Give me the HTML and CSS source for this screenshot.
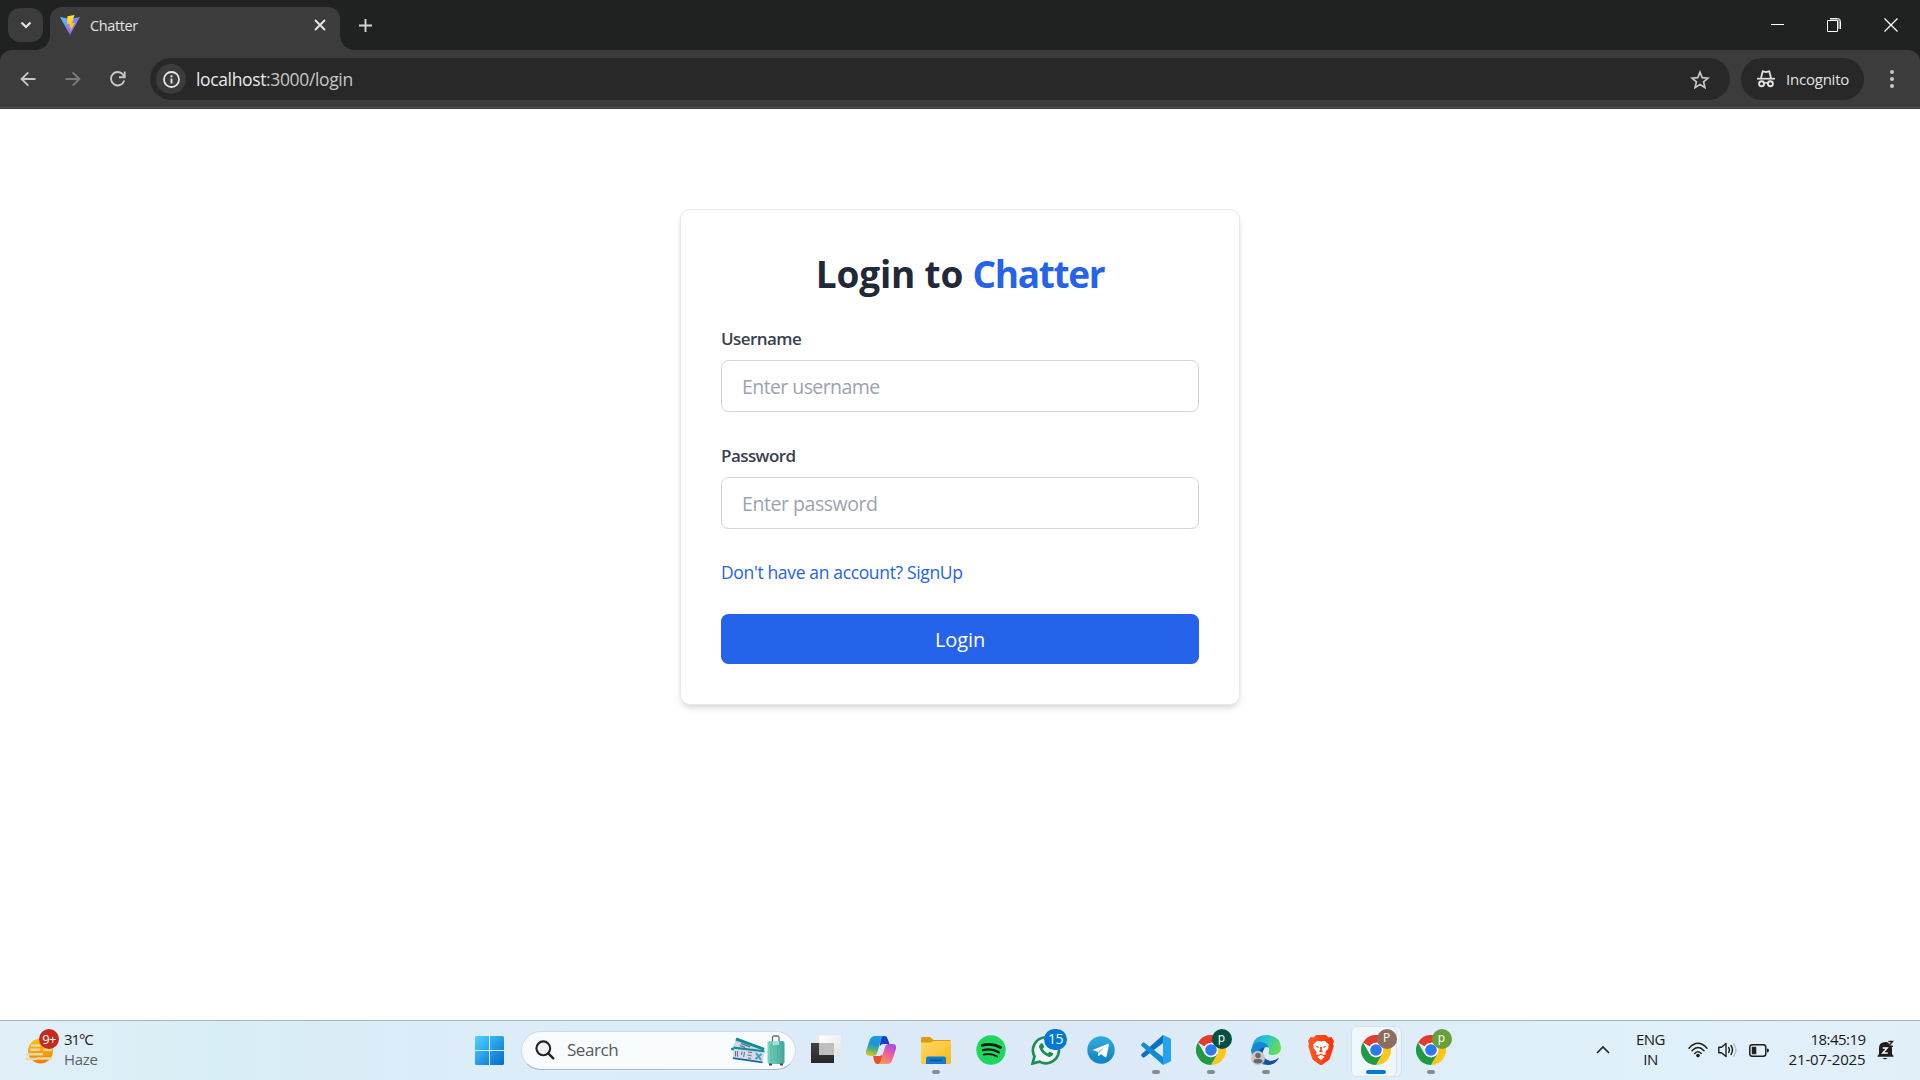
FILE: index.html
```html
<!DOCTYPE html>
<html lang="en">
<head>
<meta charset="utf-8">
<title>Chatter</title>
<link rel="stylesheet" href="styles.css">
</head>
<body>
<svg width="0" height="0" class="defs" aria-hidden="true">
  <defs>
    <linearGradient id="viteA" x1="0" y1="0" x2="1" y2="1"><stop offset="0" stop-color="#41d1ff"/><stop offset="1" stop-color="#bd34fe"/></linearGradient>
    <linearGradient id="viteB" x1="0" y1="0" x2="0" y2="1"><stop offset="0" stop-color="#ffea3b"/><stop offset="1" stop-color="#ffa800"/></linearGradient>
    <linearGradient id="win" x1="0" y1="0" x2="1" y2="1"><stop offset="0" stop-color="#4fd4ff"/><stop offset="1" stop-color="#0069cf"/></linearGradient>
    <linearGradient id="sun" x1="0" y1="0" x2="0" y2="1"><stop offset="0" stop-color="#fdc70c"/><stop offset="1" stop-color="#ef7a0c"/></linearGradient>
    <linearGradient id="dark" x1="0" y1="0" x2="0" y2="1"><stop offset="0" stop-color="#45433f"/><stop offset="1" stop-color="#262626"/></linearGradient>
    <linearGradient id="light" x1="0" y1="0" x2="1" y2="1"><stop offset="0" stop-color="#fff"/><stop offset="1" stop-color="#e4e4e4"/></linearGradient>
    <linearGradient id="copA" x1="0.4" y1="0" x2="0.2" y2="1"><stop offset="0" stop-color="#159de8"/><stop offset=".4" stop-color="#1d96cf"/><stop offset=".7" stop-color="#5fb56a"/><stop offset="1" stop-color="#e9c81f"/></linearGradient>
    <linearGradient id="copB" x1=".8" y1="0" x2=".3" y2="1"><stop offset="0" stop-color="#a24bea"/><stop offset=".5" stop-color="#ee5f9c"/><stop offset="1" stop-color="#fb9a54"/></linearGradient>
    <linearGradient id="fold" x1="0" y1="0" x2="1" y2="1"><stop offset="0" stop-color="#ffd968"/><stop offset="1" stop-color="#f9b91c"/></linearGradient>
    <linearGradient id="tg" x1="0" y1="0" x2="0" y2="1"><stop offset="0" stop-color="#33ace0"/><stop offset="1" stop-color="#0f80bd"/></linearGradient>
    <linearGradient id="edgeA" x1="0" y1="0" x2="1" y2="0.4"><stop offset="0" stop-color="#1b9de0"/><stop offset=".5" stop-color="#2bc3cf"/><stop offset="1" stop-color="#62dd58"/></linearGradient>
    <linearGradient id="brave" x1="0" y1="0" x2="1" y2="0"><stop offset="0" stop-color="#ff5a26"/><stop offset="1" stop-color="#fb2e06"/></linearGradient>
    <linearGradient id="bag" x1="0" y1="0" x2="1" y2="0"><stop offset="0" stop-color="#7ad6c2"/><stop offset="1" stop-color="#3fa795"/></linearGradient>
    <symbol id="chrome" viewBox="0 0 30 30">
      <path d="M15 15 2 7.500A15 15 0 0 1 28 7.500z" fill="#e33b2e"/>
      <path d="M28 7.500A15 15 0 0 1 15 30L21.500 18.750 15 7.500z" fill="#fdc618"/>
      <path d="M15 30A15 15 0 0 1 2 7.500L8.500 18.750 15 22.500 21.500 18.750z" fill="#229a45"/>
      <circle cx="15" cy="15" r="7.300" fill="#fff"/><circle cx="15" cy="15" r="5.800" fill="#2e78ee"/>
    </symbol>
  </defs>
</svg>

<header class="browser">
  <div class="tabstrip">
    <div class="tab-search"><svg width="12" height="8" viewBox="0 0 12 8"><path d="M1.500 1.500 6 6l4.500-4.500" fill="none" stroke="#e3e3e3" stroke-width="2.200"/></svg></div>
    <div class="tab">
      <svg width="20" height="20" viewBox="0 0 20 20"><path d="M0 2 10 4l10-2L10 20z" fill="url(#viteA)"/><path d="M14.500 0 7.500 1.300 7 9.500l3-.6-.9 4 1.900-.5-1 4.600 5-9.200-2.900.5 1-3.900z" fill="url(#viteB)"/></svg>
      <span class="tab-title">Chatter</span>
      <svg class="tab-close" width="12" height="12" viewBox="0 0 12 12"><path d="M1 1l10 10M11 1 1 11" stroke="#e3e3e3" stroke-width="2"/></svg>
    </div>
    <svg class="tab-add" width="13" height="13" viewBox="0 0 13 13"><path d="M6.500 0v13M0 6.500h13" stroke="#d5d5d5" stroke-width="1.900"/></svg>
    <div class="window-controls">
      <svg width="14" height="14" viewBox="0 0 14 14"><path d="M1 6.500h13" stroke="#fff"/></svg>
      <svg width="14" height="14" viewBox="0 0 14 14"><path d="M3 1h7.500a2.500 2.500 0 0 1 2.500 2.500V11h-2V2.500H3z" fill="#888"/><path d="M3 .5h7.500a3 3 0 0 1 3 3V11M.5 2.500h10v11H.5z" fill="none" stroke="#fff"/></svg>
      <svg width="14" height="14" viewBox="0 0 14 14"><path d="M.5.500l13 13M13.500.500l-13 13" stroke="#fff" stroke-width="1.300"/></svg>
    </div>
  </div>
  <div class="toolbar">
    <div class="nav">
      <svg width="16" height="16" viewBox="0 0 16 16"><path d="M15.500 8H2M8.300 1.300 1.600 8l6.700 6.700" fill="none" stroke="#c7c7c7" stroke-width="1.900"/></svg>
      <svg width="16" height="16" viewBox="0 0 16 16"><path d="M.5 8H14M7.700 1.300 14.400 8l-6.700 6.700" fill="none" stroke="#7b7b7b" stroke-width="1.900"/></svg>
      <svg width="16" height="16" viewBox="0 0 16 16"><path d="M14.200 9.500A6.700 6.700 0 1 1 13.300 4l1.200 1.600" fill="none" stroke="#c7c7c7" stroke-width="1.900"/><path d="M14.700.5v5.700H9" fill="none" stroke="#c7c7c7" stroke-width="1.900"/></svg>
    </div>
    <div class="omnibox">
      <div class="site-info"><svg width="17" height="17" viewBox="0 0 17 17"><circle cx="8.500" cy="8.500" r="7.500" fill="none" stroke="#e3e3e3" stroke-width="1.800"/><path d="M8.500 7.500v5M8.500 4.300v1.900" stroke="#e3e3e3" stroke-width="1.900"/></svg></div>
      <span class="url"><b>localhost</b>:3000/login</span>
      <svg class="star" width="20" height="19" viewBox="0 0 20 19"><path d="M10 2.200l2.200 5.400 5.800.5-4.400 3.800 1.300 5.700L10 14.600l-4.900 3 1.300-5.700L2 8.100l5.800-.5z" fill="none" stroke="#c7c7c7" stroke-width="1.700"/></svg>
    </div>
    <div class="incognito">
      <svg width="18" height="18" viewBox="0 0 18 18"><path d="M0 8.700h18" stroke="#e3e3e3" stroke-width="1.700"/><path d="M4 8 5.700 1.300l3.300.8 3.300-.8L14 8" fill="none" stroke="#e3e3e3" stroke-width="1.800"/><circle cx="4.600" cy="13.700" r="2.500" fill="none" stroke="#e3e3e3" stroke-width="1.900"/><circle cx="13.400" cy="13.700" r="2.500" fill="none" stroke="#e3e3e3" stroke-width="1.900"/><path d="M7 13.300q2-1 4 0" fill="none" stroke="#e3e3e3" stroke-width="1.600"/></svg>
      <span>Incognito</span>
    </div>
    <svg class="menu" width="4" height="18" viewBox="0 0 4 18"><g fill="#c7c7c7"><circle cx="2" cy="2" r="2"/><circle cx="2" cy="9" r="2"/><circle cx="2" cy="16" r="2"/></g></svg>
  </div>
</header>

<main class="page">
  <form class="card">
    <h1 class="title"><span>Login to </span><span class="brand">Chatter</span></h1>
    <label class="label" for="u">Username</label>
    <input class="field" id="u" type="text" placeholder="Enter username">
    <label class="label" for="p">Password</label>
    <input class="field field-password" id="p" type="password" placeholder="Enter password">
    <a class="signup">Don't have an account? SignUp</a>
    <button class="submit" type="button">Login</button>
  </form>
</main>

<footer class="taskbar">
  <div class="weather">
    <div class="weather-icon">
      <svg width="29" height="28" viewBox="0 0 29 28"><circle cx="15.500" cy="15" r="12.500" fill="url(#sun)"/><g stroke="#ecd9a0" stroke-width="2.600" stroke-linecap="round"><path d="M7 9.500h7M6 13.700h8M19 13.700h7"/><path d="M2 18.300h15M13 22.500h13M2 23h9"/></g><path d="M19 18.300h5" stroke="#f6a00f" stroke-width="2" stroke-linecap="round"/></svg>
      <span class="alert">9+</span>
    </div>
    <div class="weather-text"><span class="temp">31°C</span><span class="haze">Haze</span></div>
  </div>
  <svg class="start" width="29" height="29" viewBox="0 0 29 29"><path d="M0 1.500Q0 0 1.500 0H14v14H0zM15 0h12.500Q29 0 29 1.500V14H15zM0 15h14v14H1.500Q0 29 0 27.500zM15 15h14v12.500q0 1.500-1.500 1.500H15z" fill="url(#win)"/></svg>
  <div class="search">
    <svg width="20" height="20" viewBox="0 0 20 20"><circle cx="8.300" cy="8.300" r="6.900" fill="#eef1f4" stroke="#242424" stroke-width="2.100"/><path d="M13.300 13.300 18.300 18.300" stroke="#242424" stroke-width="2.400" stroke-linecap="round"/></svg>
    <span>Search</span>
    <svg class="travel" width="54" height="31" viewBox="0 0 54 31">
      <path d="M5.500 3 33.500 13.500 31 21 2 12z" fill="#cfd9e4"/><path d="M5.500 2.500 33.500 13 32.600 15.500 4.500 5.500z" fill="#118a96"/>
      <path d="M10 8.500l9 3.300M9 10.500l5 1.800" stroke="#5d6686" stroke-width="1.300"/>
      <path d="M2.500 13 33.500 16.500 31.500 28 2 23.500z" fill="#d5dae8"/><path d="M2.600 11.500 33.500 15.300v2L2.300 13.700z" fill="#168e96"/><path d="M2 22.300 31.500 26.500v1.700L1.800 24z" fill="#1668a0"/>
      <path d="M4.500 16v5.500M6.500 16v5.500M11 16.500l-.5 3.500M13.500 17l-.8 5M17 17l4 .6M16.500 20l4 .6M17 23l3 .4" stroke="#6d7592" stroke-width="1.100"/><path d="M25 18l5 7M30.500 19l-6 5" stroke="#3da0c4" stroke-width="2"/><circle cx="1.500" cy="14" r="1.500" fill="#118a96"/>
      <path d="M41.500 7V2.500q0-1.500 1.500-1.500h3.500q1.500 0 1.500 1.500V7" fill="none" stroke="#676a86" stroke-width="1.300"/><rect x="36.500" y="6" width="17" height="23" rx="2.500" fill="url(#bag)"/><path d="M40 9v17M43 11v15M46.500 11v15M50 9v17" stroke="#4db3a1" stroke-width=".9"/><path d="M42 6h6v4h-6z" fill="#a6e0d5"/><path d="M38 29.500h3M49 29.500h3" stroke="#474560" stroke-width="2"/>
    </svg>
  </div>
  <nav class="apps">
    <div class="app"><svg width="30" height="30" viewBox="0 0 30 30"><path d="M0 8h23v20H0z" fill="url(#dark)"/><path d="M8 .5h22V20H8z" fill="url(#light)"/><path d="M8 8h15v12H8z" fill="#bebebe"/></svg></div>
    <div class="app"><svg width="30" height="28" viewBox="0 0 30 28"><path d="M15 0h3.500q2.200 0 2.900 2.200L23.500 8H17q-2.500 0-3.300 2.700z" fill="#173fc4"/><path d="M9 0h9q-2 .5-2.800 3.200L11 17q-.8 3-3.500 3H4q-5 0-3.900-5L3.500 4.500Q5 0 9 0z" fill="url(#copA)"/><path d="M7 20h6.500q2 0 3-2.500L15 28h-3.500q-2.300 0-3-2.200z" fill="#e8512f"/><path d="M21 28h-9q2-.5 2.800-3.200L19 11q.8-3 3.500-3H26q5 0 3.900 5l-3.400 10.500Q25 28 21 28z" fill="url(#copB)"/></svg></div>
    <div class="app running"><svg width="30" height="27" viewBox="0 0 30 27"><path d="M0 1.500Q0 0 1.500 0H9l3.500 3H28.500Q30 3 30 4.500V12H0z" fill="#dc9a0c"/><path d="M0 5.500h9.500l3-1.500H30v21.500Q30 27 28.500 27h-27Q0 27 0 25.500z" fill="url(#fold)"/><path d="M5 27v-5.500q0-2 2-2h16q2 0 2 2V27z" fill="#1478cd"/><path d="M9 23.300h12" stroke="#0c4c93" stroke-width="1.300"/></svg></div>
    <div class="app"><svg width="30" height="30" viewBox="0 0 30 30"><circle cx="15" cy="15" r="14.700" fill="#1ed760"/><g fill="none" stroke="#111b14" stroke-linecap="round"><path d="M6.200 10.400Q16 7.500 24.500 12.500" stroke-width="2.900"/><path d="M7 15.200Q15.500 13 22.800 17.300" stroke-width="2.300"/><path d="M7.600 19.600Q15 17.900 21.200 21.500" stroke-width="1.900"/></g></svg></div>
    <div class="app"><svg width="30" height="30" viewBox="0 0 30 30"><path d="M1.500 28.500 3.500 21.500A13 13 0 1 1 8.500 26.600z" fill="#edf6f5" stroke="#1c8f56" stroke-width="2.700"/><path d="M10.500 8.300q-3 1.200-2.300 4.300 2.300 7 9.700 9.300 3.500.3 4.400-3.300l-3.600-2.200-2 2q-3.500-1.500-5-4.600l1.600-1.900-1.400-3.500z" fill="#1c8f56"/></svg><span class="badge count">15</span></div>
    <div class="app"><svg width="28" height="28" viewBox="0 0 28 28"><circle cx="14" cy="14" r="13.700" fill="url(#tg)"/><path d="M5.500 14 21 7.800q1.200-.3.900 1.200L19.500 20.500q-.5 1.200-1.600.5l-3.900-2.900-2 1.900q-.6.400-.7-.5l-.5-3.800z" fill="#fff"/><path d="M11 15.500l7-5-5.500 6.200-.6 2.500z" fill="#9cc8dd"/></svg></div>
    <div class="app running"><svg width="30" height="30" viewBox="0 0 30 30"><path d="M22 0v8L3.500 22.300Q2.500 23 1.700 22.200L.5 21q-.8-1 .1-1.900z" fill="#0d72bb"/><path d="M22 30v-8L3.500 7.700Q2.500 7 1.700 7.800L.5 9q-.8 1 .1 1.900z" fill="#178ad6"/><path d="M22 0l7 3.200q1 .5 1 1.600v20.400q0 1.100-1 1.600L22 30z" fill="#27a2ee"/></svg></div>
    <div class="app running"><svg width="30" height="30"><use href="#chrome"/></svg><span class="badge teal">p</span></div>
    <div class="app running"><svg width="30" height="30" viewBox="0 0 30 30"><path d="M1 11Q4 0 15.500 0 30 1 30 13q-.5 7-8 7-5 0-4.500-2.500Q19 15 17.500 12 13 5.500 1 11z" fill="url(#edgeA)"/><path d="M0 15Q2 6 11 7.200q6 1 6.800 5.800-3-2.500-5 1Q9 22 17 25.500q6 1.500 11-2.800Q24 30 15 30 1 28 0 15z" fill="#1687d1"/><path d="M8 16q3-5 5.300-3Q9 21 17 25.500q6 1.500 11-2.800Q24 30 17 30 7 27 8 16z" fill="#12529f"/><circle cx="7" cy="23" r="7" fill="#c8c6c4"/><circle cx="7" cy="20.500" r="2.700" fill="#68686a"/><path d="M2.500 27q0-3 3-3h3q3 0 3 3-4.500 3-9 0z" fill="#68686a"/></svg></div>
    <div class="app"><svg width="26" height="30" viewBox="0 0 26 30"><path d="M8 0h10l2.500 2.500 3-.5L26 6l-1 3 .7 2.300L22 23q-.5 1.500-1.800 2.500L14.500 29.500q-1.500 1-3 0L5.800 25.500Q4.500 24.500 4 23L.3 11.300 1 9 0 6l2.500-4 3 .5z" fill="url(#brave)"/><path d="M13 6.500l3.500-.7 4.500 3.700-.7 2 .3 1.500-3.300 4 .5 2.500-2.500.5L13 18.500 10.700 20l-2.500-.5.500-2.500-3.300-4 .3-1.500-.7-2 4.500-3.700z" fill="#fff"/><path d="M7 10.500l4 1.300-1 1.200zM19 10.500l-4 1.300 1 1.200zM11 16.500l2 1 2-1-1.300-1.200.3-3.300h-2l.3 3.300z" fill="#fb3a12"/><path d="M9.300 22l3.700-2.200 3.700 2.200L13 25z" fill="#fff"/></svg></div>
    <div class="app active"><svg width="30" height="30"><use href="#chrome"/></svg><span class="badge brown">P</span></div>
    <div class="app running"><svg width="30" height="30"><use href="#chrome"/></svg><span class="badge green">p</span></div>
  </nav>
  <div class="tray">
    <svg class="chev" width="14" height="8" viewBox="0 0 14 8"><path d="M1 7l6-6 6 6" fill="none" stroke="#222" stroke-width="1.700"/></svg>
    <div class="lang"><span>ENG</span><span>IN</span></div>
    <svg width="20" height="16" viewBox="0 0 20 16"><g fill="none" stroke="#1e1e1e" stroke-width="1.500" stroke-linecap="round"><path d="M1 6.200Q10-3.500 19 6.200M4 8.800Q10 2.300 16 8.800M6.800 11.400Q10 8 13.200 11.400"/></g><circle cx="10" cy="13.600" r="1.800" fill="#1e1e1e"/></svg>
    <svg class="volume" width="20" height="16" viewBox="0 0 20 16"><g fill="none" stroke="#1e1e1e" stroke-width="1.400" stroke-linecap="round" stroke-linejoin="round"><path d="M.8 5.300h2.700L8 1.500v13l-4.500-3.800H.8zM10.700 5.500q1.600 2.500 0 5M13 3.500q3 4.500 0 9"/></g><path d="M15.500 1.500q5 6.500 0 13" fill="none" stroke="#b6c0c8" stroke-width="1.400"/></svg>
    <svg class="battery" width="20" height="13" viewBox="0 0 20 13"><rect x=".8" y=".8" width="16" height="11.400" rx="2.500" fill="none" stroke="#1e1e1e" stroke-width="1.500"/><rect x="2.800" y="2.800" width="4.500" height="7.400" rx=".6" fill="#1e1e1e"/><path d="M18 4.500q2 0 2 2t-2 2z" fill="#1e1e1e"/></svg>
    <div class="clock"><span class="time">18:45:19</span><span class="date">21-07-2025</span></div>
    <div class="bell"><svg width="17" height="20" viewBox="0 0 17 20"><path d="M2 14V8q0-6 6.500-6T15 8v6l1.500 2v.8H.5V16z" fill="#1e1e1e"/><path d="M5.500 18h5q-2.500 2.700-5 0z" fill="#1e1e1e"/><path d="M5.700 8h4.500l-4.500 5h5" fill="none" stroke="#fff" stroke-width="1.400"/><path d="M10.500 0H17v7h-4z" fill="#e3f0f9"/><path d="M11.500 1.500h4l-4 4.800H16" fill="none" stroke="#1e1e1e" stroke-width="1.400"/></svg></div>
  </div>
</footer>
</body>
</html>
```
FILE: styles.css
```css
* { box-sizing: border-box; }
body {
  margin: 0;
  width: 1920px;
  height: 1080px;
  overflow: hidden;
  display: flex;
  flex-direction: column;
  background: #fff;
  font-family: "Open Sans", "Noto Sans", sans-serif;
}
svg { display: block; flex: none; }
span { white-space: nowrap; }
.defs { position: absolute; }

/* Browser chrome */
.browser { height: 109px; background: #202222; }
.tabstrip { display: flex; height: 50px; padding: 7px 22px 0 8px; }
.tab-search {
  position: relative; z-index: 1;
  display: flex; align-items: center; justify-content: center;
  width: 35px; height: 34px; margin: 1px 7px 0 0;
  border-radius: 12px; background: #3c3c3c;
}
.tab {
  position: relative;
  display: flex; align-items: center;
  width: 290px; height: 43px; padding: 0 14px 7px 10px;
  border-radius: 12px 12px 0 0; background: #3c3c3c;
}
.tab::before, .tab::after {
  content: ""; position: absolute; bottom: 0; width: 14px; height: 14px;
}
.tab::before { right: 100%; background: radial-gradient(circle at 0 0, #202222 13.500px, #3c3c3c 14px); }
.tab::after { left: 100%; background: radial-gradient(circle at 100% 0, #202222 13.500px, #3c3c3c 14px); }
.tab-title { margin-left: 10px; font-size: 14.500px; letter-spacing: -0.4px; color: #e3e3e3; }
.tab-close { margin-left: auto; }
.tab-add { margin: 12px 0 0 19px; }
.window-controls { display: flex; gap: 43px; margin: 11px 0 0 auto; }
.toolbar {
  display: flex; align-items: center;
  height: 59px; padding: 0 26px 0 20px;
  border-radius: 12px 12px 0 0; background: #3c3c3c;
  border-bottom: 1px solid #3c3c3c;
  box-shadow: inset 0 -1px #505050;
}
.nav { display: flex; gap: 29px; width: 130px; margin-bottom: 1px; }
.omnibox {
  display: flex; align-items: center;
  width: 1580px; height: 42px; padding: 0 20px 0 6px;
  border-radius: 21px; background: #282828;
}
.site-info {
  display: flex; align-items: center; justify-content: center;
  width: 30px; height: 30px; border-radius: 50%; background: #3c3c3c;
}
.url { margin-left: 10px; font-size: 17.500px; letter-spacing: -0.36px; color: #c7c7c7; }
.url b { font-weight: 400; color: #e8e8e8; }
.star { margin-left: auto; }
.incognito {
  display: flex; align-items: center;
  width: 123px; height: 42px; margin: 0 0 1px 11px; padding-left: 16px;
  border-radius: 21px; background: #282828; color: #e3e3e3;
  font-size: 15px; letter-spacing: -0.22px;
}
.incognito span { margin-left: 11px; }
.menu { margin: 0 0 1px auto; }

/* Login page */
.page { flex: 1; padding-top: 100px; }
.card {
  display: flex; flex-direction: column;
  width: 560px; height: 496px; margin: 0 auto; padding: 40px;
  border: 1px solid #e8e8ea; border-radius: 10px;
  box-shadow: 0 5px 7px -1px rgba(0,0,0,.1), 0 2px 5px -2px rgba(0,0,0,.1);
}
.title {
  margin: 0 0 29px; text-align: center; color: #1f2937;
  font-size: 37px; font-weight: 700; line-height: 47px; letter-spacing: -0.2px;
}
.brand { color: #2563eb; letter-spacing: -1.35px; }
.label {
  margin-bottom: 9px; color: #374151;
  font-size: 17px; font-weight: 600; line-height: 25px; letter-spacing: -0.56px;
}
.field {
  height: 52px; margin: 0 0 31px; padding: 0 20px;
  border: 1px solid #d1d5db; border-radius: 7.500px; background: #fff;
  font: 400 19.500px "Open Sans", "Noto Sans", sans-serif; letter-spacing: -0.58px;
}
.field::placeholder { color: #9ca3af; opacity: 1; }
.field-password { letter-spacing: -0.45px; }
.signup { font-size: 17.500px; line-height: 25px; letter-spacing: -0.35px; color: #2563eb; }
.submit {
  height: 50px; margin-top: 29px; padding: 0; border: 0;
  border-radius: 7.500px; background: #2563eb; color: #fff;
  font: 500 20px "Open Sans", "Noto Sans", sans-serif; letter-spacing: -0.1px;
}

/* Windows taskbar */
.taskbar {
  display: flex; align-items: center;
  height: 60px; padding: 0 0 1px 25px;
  border-top: 1px solid #a9b4bf;
  background: linear-gradient(90deg, #e1eff8 0, #d8eef6 220px, #dcecf8 480px, #dbeaf6 1100px, #e0f0fa 1600px, #e1eff9);
}
.taskbar span { line-height: 20px; }
.weather { display: flex; width: 450px; }
.weather-icon { position: relative; height: 34px; }
.weather-icon svg { margin-top: 4px; }
.alert {
  position: absolute; left: 14px; top: -3px; width: 20px; height: 20px;
  border-radius: 50%; background: #c42b1c; color: #fff;
  font-size: 13px; text-align: center; letter-spacing: -0.6px;
}
.weather-text { display: flex; flex-direction: column; margin: -3px 0 0 10px; font-size: 15px; color: #1c1c1c; }
.temp { letter-spacing: -1.1px; }
.haze { color: #5c6266; letter-spacing: -0.35px; }
.start { margin-top: 1px; }
.search {
  display: flex; align-items: center;
  width: 275px; height: 39px; margin: 0 2px 0 17px; padding: 0 10px 0 13px;
  border: 1px solid #cfdce6; border-bottom-color: #a9b9c6; border-radius: 20px;
  background: #f7fbfe; color: #55595d; font-size: 17px; letter-spacing: -0.45px;
}
.search span { margin-left: 12px; }
.travel { margin-left: auto; }
.apps { display: flex; height: 58px; }
.app { position: relative; display: flex; align-items: center; justify-content: center; width: 55px; }
.running::after, .active::after {
  content: ""; position: absolute; left: 23.500px; top: 49px;
  width: 8px; height: 4px; border-radius: 2px; background: #868b90;
}
.active::after { left: 17.500px; width: 20px; background: #0078d4; }
.active::before {
  content: ""; position: absolute; left: 3px; top: 5px; width: 44px; height: 49px;
  border: 1px solid #d8e2ea; border-radius: 6px; background: #eff6fc;
  box-shadow: 5px 0 0 -1px #eaf3fa, 5px 0 0 #d5e0e9;
}
.active svg { position: relative; }
.badge {
  position: absolute; left: 28.500px; top: 8px; width: 20px; height: 20px;
  border-radius: 50%; color: #fff; font-size: 12px; text-align: center;
}
.taskbar .badge { line-height: 18px; }
.badge.count { left: 26px; width: 23px; height: 21px; background: #0078d4; border-radius: 11px; font-size: 14px; letter-spacing: -0.4px; }
.taskbar .count { line-height: 20px; }
.teal { background: #064f44; }
.brown { background: #8c6d62; }
.green { background: #689f38; }
.tray { display: flex; align-items: center; margin-left: auto; padding-right: 26.500px; color: #1a1a1a; font-size: 15px; }
.tray > div { display: flex; flex-direction: column; }
.lang { width: 30px; margin: -1px 22px 0 26px; align-items: center; letter-spacing: -0.5px; }
.volume { margin-left: 10px; }
.battery { margin-left: 11px; }
.clock { align-items: flex-end; width: 80px; margin: -2px 11px 0 17px; }
.lang, .clock { height: 41px; }
.time { letter-spacing: -0.54px; }
.date { letter-spacing: -0.13px; }
```
